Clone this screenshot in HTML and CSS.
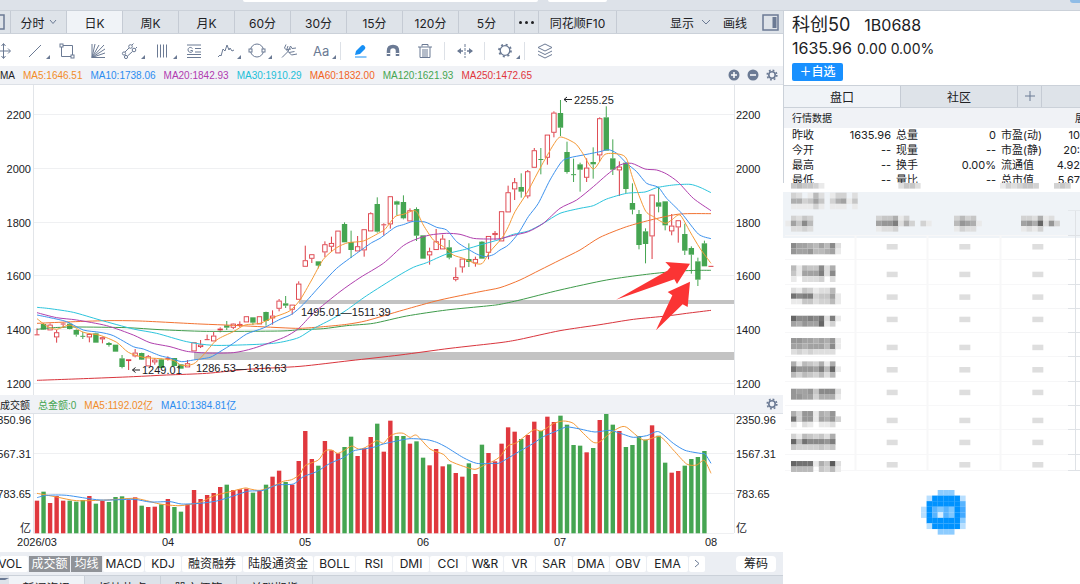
FILE: index.html
```html
<!DOCTYPE html>
<html lang="zh-CN">
<head>
<meta charset="utf-8">
<title>科创50 1B0688</title>
<link rel="stylesheet" href="styles.css">
</head>
<body>
<div class="app">
  <header class="topbar">
    <span class="topbar-tab topbar-tab-wide"></span><span class="topbar-tab"></span>
    <span class="avatar"></span>
  </header>
  <div class="columns">
    <main class="chart-pane">
      <nav class="periods">
        <button class="period edge" aria-label="左侧栏"><svg width="10" height="18" viewBox="0 0 10 18"><path d="M0 2H4V16H0" fill="none" stroke="#6b7a94" stroke-width="1.5"/></svg></button>
        <button class="period">分时 <svg class="chev" width="8" height="6" viewBox="0 0 8 6"><path d="M1 1L4 4.500L7 1"/></svg></button>
        <button class="period active">日K</button>
        <button class="period">周K</button>
        <button class="period">月K</button>
        <button class="period">60分</button>
        <button class="period">30分</button>
        <button class="period">15分</button>
        <button class="period">120分</button>
        <button class="period">5分</button>
        <button class="period more" aria-label="更多"><i></i><i></i><i></i></button>
        <button class="period wide">同花顺F10</button>
        <div class="period-actions">
          <button class="action">显示 <svg class="chev" width="10" height="6" viewBox="0 0 10 6"><path d="M1 1L5 5L9 1"/></svg></button>
          <button class="action">画线</button>
          <button class="action" aria-label="右侧栏"><svg width="17" height="17" viewBox="0 0 17 17"><rect x="1" y="1" width="15" height="15" fill="none" stroke="#6b7a94" stroke-width="1.500"/><rect x="10.500" y="3" width="4" height="11" fill="#6b7a94"/></svg></button>
        </div>
      </nav>

      <div class="tools">
        <button class="tool first" aria-label="移动"><svg width="12" height="18" viewBox="0 0 12 18"><path d="M0 9H10M3.500 2V16M8 6.500L10.500 9L8 11.500M1.500 4L3.500 1.500L5.500 4M1.500 14L3.500 16.500L5.500 14"/></svg></button>
        <div class="draw-tools">
          <button class="tool sub" aria-label="线段"><svg viewBox="0 0 18 18"><path d="M3 15L15 3"/></svg></button>
          <button class="tool" aria-label="矩形"><svg viewBox="0 0 18 18"><path d="M5 3.500H14.500V13M13 14.500H3.500V5"/><rect x="2" y="2" width="3" height="3"/><rect x="13" y="13" width="3" height="3"/></svg></button>
          <button class="tool" aria-label="扇形线"><svg viewBox="0 0 18 18"><path d="M3 2V15.500H16M3 15.500L6 2M3 15.500L10 3M3 15.500L15 3M3 15.500L16 7M3 15.500L16 11"/></svg></button>
          <button class="tool sub" aria-label="通道"><svg viewBox="0 0 18 18"><path d="M4 10L8 6M11 3L12.500 1.500M6.500 14L11.500 9.500M14.500 6.500L16 5"/><circle cx="9.500" cy="4.500" r="1.800"/><circle cx="5" cy="15" r="1.600"/><circle cx="13" cy="8" r="1.800"/><circle cx="3" cy="11.500" r="1.600"/></svg></button>
          <button class="tool sub" aria-label="周期线"><svg viewBox="0 0 18 18"><path d="M4.500 2.500V15.500M7.500 2.500V15.500M10.500 2.500V15.500M13.500 2.500V15.500"/></svg></button>
          <button class="tool" aria-label="黄金分割"><svg viewBox="0 0 18 18"><path d="M2 3H16M10 6.500H16M10 10H16M2 12.500H16M2 15.500H16M7.500 6.500C5.500 4.500 3 5.500 3 8S6.500 11 7.500 9.500V8.500H5.500"/></svg></button>
          <button class="tool sub" aria-label="波浪"><svg viewBox="0 0 18 18"><path d="M1 15L3 13L4 14L6 7L8 9L10 3L12 8L13 6L15 9L17 8"/></svg></button>
          <button class="tool sub" aria-label="圆"><svg viewBox="0 0 18 18"><circle cx="9" cy="8.500" r="6.500"/><rect x="1" y="7" width="3" height="3" fill="#fff"/><rect x="14" y="7" width="3" height="3" fill="#fff"/></svg></button>
          <button class="tool" aria-label="叉线"><svg viewBox="0 0 18 18"><path d="M2 15.500L8 9.500M4.500 6L11.500 13M4.500 6L6 2.500M6.500 8L8 4M9 10.500L14.500 9.500M11.500 13L17 12M8 9.500L10.500 4L12 6.500L16 6M7 7.500L11 7"/></svg></button>
          <button class="tool sub tool-text">Aa</button>
        </div>
        <span class="sep"></span>
        <button class="tool" aria-label="画笔"><svg viewBox="0 0 18 18"><path d="M3 13L4 9L9.500 3.500Q11 2.500 12.500 4T13 7L8 12Z" fill="#168ff5" stroke="none"/><path d="M3 15H14.500" stroke="#168ff5"/></svg></button>
        <button class="tool" aria-label="磁吸"><svg viewBox="0 0 18 18"><path d="M4.500 14V9Q4.500 4.500 9 4.500T13.500 9V14" stroke-width="3.500"/><path d="M2.500 11.500H6.500M11.500 11.500H15.500" stroke="#fff"/></svg></button>
        <button class="tool" aria-label="删除"><svg viewBox="0 0 18 18"><path d="M2 5H16M6 4.500V2.500H12V4.500M4 5V15.500H14V5M7 7V15M9 7V15M11 7V15"/></svg></button>
        <span class="sep"></span>
        <button class="tool" aria-label="拉伸"><svg viewBox="0 0 18 18"><path d="M9 2V16" stroke-dasharray="3 1"/><path d="M2 9H7M11 9H16" stroke-width="1.500"/><path d="M1 9L5 6V12ZM17 9L13 6V12Z" fill="#6b7a94" stroke="none"/></svg></button>
        <span class="sep"></span>
        <button class="tool sub" aria-label="设置"><svg viewBox="0 0 18 18"><circle cx="9" cy="8.500" r="4.800" stroke-width="1.300"/><circle cx="9" cy="8.500" r="6" stroke-width="1.800" stroke-dasharray="2 2.700"/></svg></button>
        <span class="sep"></span>
        <button class="tool" aria-label="图层"><svg viewBox="0 0 18 18"><path d="M9 2L16 5.500L9 9L2 5.500ZM2 9L9 12.500L16 9M2 12.500L9 16L16 12.500"/></svg></button>
      </div>

      <div class="legend">
        <span class="legend-name">MA</span>
        <span class="c-orange">MA5:1646.51</span>
        <span class="c-blue">MA10:1738.06</span>
        <span class="c-purple">MA20:1842.93</span>
        <span class="c-cyan">MA30:1910.29</span>
        <span class="c-deep">MA60:1832.00</span>
        <span class="c-green">MA120:1621.93</span>
        <span class="c-red">MA250:1472.65</span>
        <div class="legend-actions">
          <button aria-label="放大"><svg viewBox="0 0 12 12"><circle cx="6" cy="6" r="5.500" fill="#6b7a94"/><path d="M3 6H9M6 3V9" stroke="#fff" stroke-width="1.500"/></svg></button>
          <button aria-label="缩小"><svg viewBox="0 0 12 12"><circle cx="6" cy="6" r="5.500" fill="#6b7a94"/><path d="M3 6H9" stroke="#fff" stroke-width="1.500"/></svg></button>
          <button aria-label="指标设置"><svg viewBox="0 0 12 12"><circle cx="6" cy="6" r="3.200" fill="none" stroke="#6b7a94" stroke-width="1.600"/><circle cx="6" cy="6" r="4.800" fill="none" stroke="#6b7a94" stroke-width="1.600" stroke-dasharray="1.800 1.970"/></svg></button>
        </div>
      </div>
      <svg class="plot" id="price" viewBox="0 0 783 310" role="img" aria-label="日K线"></svg>

      <div class="legend">
        <span class="legend-name">成交额</span>
        <span class="c-green">总金额:0</span>
        <span class="c-orange">MA5:1192.02亿</span>
        <span class="c-blue">MA10:1384.81亿</span>
        <div class="legend-actions">
          <button aria-label="成交额设置"><svg viewBox="0 0 12 12"><circle cx="6" cy="6" r="3.200" fill="none" stroke="#6b7a94" stroke-width="1.600"/><circle cx="6" cy="6" r="4.800" fill="none" stroke="#6b7a94" stroke-width="1.600" stroke-dasharray="1.800 1.970"/></svg></button>
        </div>
      </div>
      <svg class="plot" id="volume" viewBox="0 0 783 138" role="img" aria-label="成交额"></svg>

      <nav class="indicators">
        <button class="w28 vol">VOL</button><button class="w42 on">成交额</button><button class="w32 on">均线</button>
        <button class="w42">MACD</button><button class="w36">KDJ</button><button class="w60">融资融券</button><button class="w70">陆股通资金</button>
        <button class="w42">BOLL</button><button class="w36">RSI</button><button class="w36">DMI</button><button class="w36">CCI</button><button class="w36">W&amp;R</button>
        <button class="w32">VR</button><button class="w36">SAR</button><button class="w36">DMA</button><button class="w36">OBV</button><button class="w42">EMA</button>
        <button class="w16" aria-label="更多指标"><svg class="chev" width="6" height="9" viewBox="0 0 6 9"><path d="M1 1L5 4.500L1 8"/></svg></button>
        <button class="w40 chips">筹码</button>
      </nav>
      <nav class="bottom-tabs">
        <button class="dock" aria-label="展开"></button>
        <button class="active">新闻资讯</button><button>板块热点</button><button>股市便签</button><button>关联期指</button>
      </nav>
    </main>

    <aside class="quote">
      <section class="quote-head">
        <h1><span class="name">科创50</span><span class="code">1B0688</span></h1>
        <p class="price"><span class="last">1635.96</span> 0.00 0.00%</p>
        <button class="add">＋自选</button>
      </section>
      <nav class="quote-tabs">
        <button class="active">盘口</button><button>社区</button><button class="plus" aria-label="添加"><svg width="10" height="10" viewBox="0 0 10 10"><path d="M0 5H10M5 0V10" stroke="#6b7a94"/></svg></button><span></span>
      </nav>
      <div class="quote-sub"><span>行情数据</span><span class="expand">展开</span></div>
      <div class="quote-data">
        <table>
          <tr><th>昨收</th><td>1635.96</td><th>总量</th><td>0</td><th>市盈(动)</th><td>10</td></tr>
          <tr><th>今开</th><td>--</td><th>现量</th><td>--</td><th>市盈(静)</th><td>20:</td></tr>
          <tr><th>最高</th><td>--</td><th>换手</th><td>0.00%</td><th>流通值</th><td>4.92</td></tr>
          <tr><th>最低</th><td>--</td><th>量比</th><td>--</td><th>总市值</th><td>5.67</td></tr>
        </table>
      </div>
      <svg class="mosaic" id="mosaic" viewBox="0 0 297 293" aria-hidden="true"></svg>
      <div class="quote-foot">
        <button class="assist" aria-label="助手"><svg id="assist" width="46" height="46" viewBox="0 0 138 138"></svg></button>
      </div>
    </aside>
  </div>
</div>
<script src="chart.js"></script>
</body>
</html>
```
FILE: styles.css
```css
* { box-sizing: border-box; }
body {
  margin: 0;
  background: #fff;
  color: #202124;
  font-family: Inter, "Noto Sans CJK SC", sans-serif;
  font-size: 12px;
}
button {
  margin: 0;
  padding: 0;
  border: 0;
  background: none;
  color: inherit;
  font: inherit;
  white-space: nowrap;
}
h1, p { margin: 0; font-weight: 400; }

.app { height: 100vh; overflow: hidden; display: flex; flex-direction: column; }
.topbar {
  flex: 0 0 10px;
  display: flex;
  align-items: flex-start;
  gap: 10px;
  padding-left: 243px;
  background: #dde2e9;
  overflow: hidden;
}
.topbar-tab { width: 59px; height: 2px; background: #fff; border-radius: 0 0 3px 3px; }
.topbar-tab-wide { width: 295px; }
.avatar { width: 16px; height: 3px; margin-left: auto; margin-right: -6px; border-radius: 0 0 8px 8px; background: #8fbce6; }
.columns { flex: 1; display: flex; min-height: 0; }
.chart-pane { flex: 783 1 0; min-width: 0; }
.quote { flex: 297 1 0; min-width: 0; overflow: hidden; }

.periods {
  display: flex;
  height: 24px;
  background: #dee3e9;
  border-top: 1px solid #cbd1d9;
  border-bottom: 1px solid #cbd1d9;
}
.period {
  flex: 0 0 56px;
  display: flex;
  align-items: center;
  justify-content: center;
  gap: 4px;
  border-right: 1px solid #c5cbd4;
}
.period.edge { flex-basis: 9px; justify-content: flex-start; }
.period.active { background: #f0f3f7; }
.period.more { flex-basis: 24px; gap: 3px; }
.period.more i { width: 3px; height: 3px; border-radius: 50%; background: #202124; }
.period.wide { flex-basis: 78px; }
.period-actions { margin-left: auto; display: flex; align-items: center; gap: 12px; padding-right: 4px; }
.action { display: flex; align-items: center; gap: 7px; }
.action:last-child { margin-left: 3px; }
.chev { fill: none; stroke: #6b7a94; }

.tools { display: flex; align-items: center; height: 32px; padding-top: 2px; background: #fff; }
.tool { position: relative; flex: 0 0 32px; height: 26px; display: flex; align-items: center; justify-content: center; }
.tool.first { flex-basis: 19px; justify-content: flex-start; }
.tool svg { height: 18px; fill: none; stroke: #6b7a94; stroke-width: 1; }
.draw-tools { flex: 0 0 318px; display: grid; grid-template-columns: repeat(10, 1fr); }
.tool-text { color: #6b7a94; font-size: 13px; }
.tool.sub::after {
  content: "";
  position: absolute;
  right: 1px;
  bottom: 5px;
  border-left: 4px solid transparent;
  border-bottom: 4px solid #6b7a94;
}
.sep { flex: 0 0 1px; height: 18px; margin: 0 4px 0 3px; background: #dde1e7; }

.legend {
  display: flex;
  align-items: center;
  gap: 8px;
  height: 19px;
  background: #f0f2f6;
  border-bottom: 1px solid #dde1e7;
  font-family: "Liberation Sans", "Noto Sans CJK SC", sans-serif;
  font-size: 10px;
  white-space: nowrap;
}
.legend-actions { margin-left: auto; display: flex; gap: 7px; padding-right: 5px; }
.legend-actions button { width: 12px; height: 12px; }
.legend-actions svg { display: block; width: 12px; height: 12px; }
.c-orange { color: #f28c28; }
.c-blue { color: #2b8cf0; }
.c-purple { color: #b03ab0; }
.c-cyan { color: #1cc0d8; }
.c-deep { color: #f2641e; }
.c-green { color: #45a551; }
.c-red { color: #e0353c; }

.plot { display: block; width: 100%; height: auto; font-family: "Liberation Sans", "Noto Sans CJK SC", sans-serif; font-size: 11px; }
.plot text { fill: #202124; }
.grid { stroke: #eff0f2; }
.axis { stroke: #e2e5e9; }
.line { fill: none; stroke-width: 1; }
.band { fill: #c3c3c3; }
.mark { fill: #fb3434; }
.arrow { fill: none; stroke: #202124; }

.indicators { display: flex; align-items: center; gap: 1px; height: 24px; padding-top: 1px; background: #ebeef3; border-bottom: 1px solid #cbd1d9; }
.indicators button { height: 16px; line-height: 16px; background: #fff; border-radius: 2px; overflow: hidden; }
.indicators .on { background: #909398; color: #fff; border-radius: 0; }
.indicators .vol { display: flex; justify-content: flex-end; padding-right: 6px; }
.w16 { flex: 0 0 16px; }
.w28 { flex: 0 0 28px; }
.w32 { flex: 0 0 31px; }
.w36 { flex: 0 0 36px; }
.w40 { flex: 0 0 40px; }
.w42 { flex: 0 0 41px; }
.w60 { flex: 0 0 60px; }
.w70 { flex: 0 0 70px; }
.indicators .chips { margin-left: auto; margin-right: 7px; border-radius: 4px; }

.bottom-tabs { display: flex; height: 20px; background: #dde2e9; }
.bottom-tabs button { flex: 0 0 76px; padding-top: 2px; border-right: 1px solid #cbd1d9; }
.bottom-tabs .dock { flex-basis: 9px; height: 16px; border-top: 2px solid #6b7a94; border-right: 4px solid #dde2e9; margin-top: 2px; }
.bottom-tabs .active { background: #f0f3f7; }

.quote-head { padding: 2px 8px 0; height: 75px; border-left: 1px solid #cbd1d9; border-top: 1px solid #cbd1d9; }
.quote-head h1 { display: flex; align-items: baseline; gap: 14px; line-height: 24px; }
.name { font-size: 18px; }
.code { font-size: 16px; }
.price { font-size: 14px; line-height: 22px; }
.last { font-size: 16px; margin-right: 1px; }
.add { display: block; width: 51px; height: 18px; margin-top: 3px; border-radius: 2px; background: #1890ff; color: #fff; line-height: 18px; font-weight: 500; }
.quote-tabs { display: flex; height: 23px; background: #dee3e9; border: 1px solid #cbd1d9; border-right: 0; }
.quote-tabs button { flex: 0 0 117px; border-right: 1px solid #c5cbd4; }
.quote-tabs .plus { flex-basis: 24px; }
.quote-tabs .active { background: #f0f3f7; }
.quote-sub {
  display: flex;
  justify-content: space-between;
  height: 20px;
  padding-left: 8px;
  line-height: 20px;
  background: #f0f2f6;
  border-left: 1px solid #cbd1d9;
  font-size: 10px;
  white-space: nowrap;
}
.expand { margin-right: -15px; }
.quote-data { height: 55px; overflow: hidden; border-left: 1px solid #cbd1d9; }
.quote-data table { width: 100%; table-layout: fixed; border-collapse: collapse; font-size: 11px; }
.quote-data tr { height: 15px; }
.quote-data th, .quote-data td { padding: 0; line-height: 15px; font-weight: 400; white-space: nowrap; }
.quote-data th { width: 50px; padding-left: 5px; text-align: left; }
.quote-data th:first-child { width: 53px; padding-left: 8px; }
.quote-data td { text-align: right; }
.quote-data td:nth-child(2) { width: 54px; }
.quote-data td:nth-child(4) { width: 55px; }
.mosaic { display: block; width: 100%; height: auto; }
.quote-foot { padding: 14px 0 0 138px; height: 107px; }
.assist { display: block; width: 46px; height: 46px; }
.assist svg { display: block; }
```
FILE: chart.js
```js
// Chart geometry uses thirds of a unit, so every value is a whole number.
const T = 3, X0 = 111, STEP = 19.63;
const RED = '#dc3b44', GREEN = '#45a551', BAR_RED = '#e0383e';
const cx = i => X0 + i * STEP;
const el = (tag, attrs, text) => {
  const a = Object.entries(attrs).map(([k, v]) => `${k}="${v}"`).join(' ');
  return `<${tag} ${a}>${text || ''}</${tag}>`;
};
const n = v => Math.round(v * 100) / 100;

// Candle groups: vertical base, then colour, high, body top, body bottom, low.
const candles = [
  [840, `r145,163,166,166 g129,132,149,150 r130,134,151,151 r150,157,172,188 r128,130,134,144 g128,131,147,148
  g148,150,164,170 g155,168,170,177 r160,162,172,187 g158,160,188,188 r170,172,178,190 g186,189,195,200 g194,194,215,215
  g225,235,261,265 r238,238,243,270 r207,218,229,232 g218,219,239,240 r225,229,259,259 r234,239,247,254 g236,238,264,264
  r229,234,238,242 g234,234,258,259 g252,253,266,266 r240,250,262,262 r187,187,214,214 r180,194,201,204 r164,178,180,180
  r155,167,184,184 r142,146,151,157 g123,136,143,150 r130,131,143,147 r124,132,138,142 r109,109,127,127 g112,112,128,135
  r109,109,133,133 g95,96,123,137 r91,107,115,134 r57,62,86,94 g48,70,77,84 r74,74,89,104 r4,11,59,59`],
  [540, `r197,241,260,260 r223,223,236,249 g244,244,257,265 r184,193,217,231 r170,189,200,216 r152,152,220,220 g127,132,187,187
  g152,186,210,234 r168,199,214,214 r148,148,211,230 r97,100,154,154 g52,72,155,158 r130,133,136,167 r49,49,133,146
  g62,64,74,106 g46,66,115,118 r85,91,124,124 g82,87,167,183 g166,166,236,236 r203,214,226,254 r147,184,210,210
  r164,176,208,208 g180,202,233,238 r262,291,299,304 r236,236,262,278 g190,237,246,261 r230,237,250,260 g183,185,236,236
  r168,168,218,238 r153,159,165,180`],
  [270, `r364,364,454,454 r287,307,367,367 r264,277,298,330 g250,291,305,323 r240,244,319,325 r174,181,233,233 g174,207,210,253
  r134,134,203,224 r64,68,128,142 g30,69,113,138 g155,186,246,251 g206,253,255,276 g218,223,239,305 r205,233,263,276
  g172,216,223,266 r82,85,196,214 g49,82,182,182 g148,205,239,255 r214,230,241,318 g216,218,297,310 g280,339,359,373
  g360,372,465,478 g415,424,462,520 r314,314,439,507 g290,337,350,367 g334,334,406,421 r372,407,424,436 r391,391,412,458
  g401,432,482,495 g469,474,494,551 g503,514,569,588 g452,460,529,529 r528,528,530,530`]
];

// Line groups: [x base, y base, points].
const A = 840, B = 540, C = 270;
const lines = {
  '#d9353d': [[0, A, '111,301 250,296 400,290 500,285 620,280 740,268 900,259 1050,242 1200,225 1350,205'], [1500, C, '0,758 60,748 180,722 300,704 400,688 500,678 560,670 633,661']],
  '#3f9b4b': [[0, A, '111,148 160,143 230,141 380,143 480,149 620,154 840,153'], [A, B, '60,449 130,446 200,437 280,430 380,408 500,390 620,378'], [1500, C, '0,643 60,630 180,600 320,570 440,553 540,543 600,541 633,541']],
  '#f27332': [[0, A, '111,130 200,126 320,122 420,123 600,132 700,136'], [A, B, '0,443 60,445 130,440 200,433 260,422 370,390 480,360 600,335'], [1500, C, '0,593 60,570 120,540 180,510 240,480 300,442 380,410 460,388 540,372 633,371']],
  '#2cc4dc': [[0, A, '111,82 150,86 220,97 300,120 400,147 470,160 560,185 640,196 750,194 820,190 860,183 898,172'], [A, B, '100,446 160,415 200,390 260,347 350,290 400,262 440,248 500,222 560,207 600,195'], [1500, C, '0,448 40,433 85,423 130,400 180,370 240,355 280,347 320,327 380,310 435,306 470,293 520,285 570,283 600,292 633,308']],
  '#b040ae': [[0, A, '111,98 170,113 230,120 320,137 400,165 450,188 510,200 560,214 620,219 700,218 760,205 850,173'], [A, B, '55,446 100,400 180,335 240,293 310,250 370,197 410,177 450,165 500,160 540,163 580,175 620,177'], [1500, C, '0,446 40,436 85,425 130,400 180,355 230,330 280,290 320,255 360,225 395,220 435,237 470,240 500,252 535,277 580,325 633,362']],
  '#3d92ee': [[0, A, '111,105 150,113 200,125 250,150 300,157 340,167 400,200 430,207 480,227 510,234 545,245 580,240 630,232 660,215 700,190 740,162 790,144'], [A, B, '0,418 35,403 70,373 120,318 170,265 230,220 275,188 300,175 345,142 370,134 400,124 435,126 470,142 500,150 530,185 560,205 590,222 615,230 640,224'], [1500, C, '0,480 25,465 55,430 85,380 115,340 150,270 185,215 210,203 250,195 300,185 325,179 350,190 380,220 410,245 440,280 475,292 500,325 545,370 595,432 633,446']],
  '#f59a37': [[0, A, '111,116 140,138 170,148 210,135 250,157 300,166 350,187 385,217 430,232 480,236 520,241 545,256 580,252 610,225 650,180 700,155 735,135 780,130 820,112'], [A, B, '0,405 30,392 60,360 95,300 130,238 170,203 205,188 250,183 295,160 315,148 345,110 370,103 400,92 412,98 430,135 460,180 490,200 520,225 550,235 585,250 607,250 630,215'], [1500, C, '5,445 25,410 45,365 80,310 120,235 160,165 182,141 225,160 245,185 280,237 315,193 360,193 380,207 400,270 435,360 460,380 495,400 515,390 540,375 570,425 600,475 633,520']]
};

const points = groups => groups.flatMap(([bx, by, s]) => s.trim().split(/\s+/).map(p => {
  const [x, y] = p.split(',').map(Number);
  return [bx + x, by + y];
}));

function smooth(pts, oy) {
  const p = pts.map(([x, y]) => [x / T, y / T - oy]);
  let d = `M${n(p[0][0])} ${n(p[0][1])}`;
  for (let i = 0; i < p.length - 1; i++) {
    const a = p[i - 1] || p[i], b = p[i], c = p[i + 1], e = p[i + 2] || c;
    d += `C${n(b[0] + (c[0] - a[0]) / 8)} ${n(b[1] + (c[1] - a[1]) / 8)} ${n(c[0] - (e[0] - b[0]) / 8)} ${n(c[1] - (e[1] - b[1]) / 8)} ${n(c[0])} ${n(c[1])}`;
  }
  return d;
}

function drawPrice() {
  const top = 85;
  const y = v => n(v / T - top);
  let out = '';
  ['2200', '2000', '1800', '1600', '1400', '1200'].forEach((label, k) => {
    const gy = Math.floor(y(344 + k * 161)) + 0.5;
    out += el('path', { class: 'grid', d: `M33 ${gy}H734` });
    out += el('text', { x: 31, y: gy + 4, 'text-anchor': 'end' }, label);
    out += el('text', { x: 736, y: gy + 4 }, label);
  });
  out += el('path', { class: 'axis', d: 'M33.5 0V310M734.5 0V310' });
  out += el('rect', { class: 'band', x: 194, y: y(1056), width: 540, height: 8 });
  out += el('rect', { class: 'band', x: 299, y: y(900), width: 435, height: 4 });
  let i = 0;
  candles.forEach(([base, text]) => text.trim().split(/\s+/).forEach(item => {
    const red = item[0] === 'r';
    const [hi, a, b, lo] = item.slice(1).split(',').map(v => y(base + +v));
    const x = n(cx(i++) / T);
    const color = red ? RED : GREEN;
    out += el('path', { d: `M${x} ${hi}V${a}M${x} ${b}V${lo}`, stroke: color });
    if (b - a < 1.5) out += el('path', { d: `M${x - 2.5} ${(a + b) / 2}h5`, stroke: color });
    else if (red) out += el('rect', { x: n(x - 2.2), y: a + 0.4, width: 4.4, height: n(b - a - 0.8), fill: '#fff', stroke: color, 'stroke-width': 0.9 });
    else out += el('rect', { x: n(x - 2.7), y: a, width: 5.4, height: n(b - a), fill: color });
  }));
  for (const [color, groups] of Object.entries(lines)) out += el('path', { class: 'line', stroke: color, d: smooth(points(groups), top) });
  out += el('path', { class: 'arrow', d: 'M572 14.500H564M567 12L564 14.500L567 17M140 285H132.500M135.500 282.500L132.500 285L135.500 287.500' });
  out += el('text', { x: 574, y: 19 }, '2255.25');
  out += el('text', { x: 142, y: 289 }, '1249.01');
  out += el('text', { x: 196, y: 287 }, '1286.53—1316.63');
  out += el('text', { x: 301, y: 231 }, '1495.01—1511.39');
  const poly = s => s.split(' ').map(p => { const [a, b] = p.split(','); return n(500 + a / T) + ',' + n(90 - top + b / T); }).join(' ');
  out += el('polygon', { class: 'mark', points: poly('348,629 502,542 511,532 496,516 570,521 531,582 523,568') });
  out += el('polygon', { class: 'mark', points: poly('468,721 517,616 503,606 570,575 563,651 548,643') });
  document.getElementById('price').innerHTML = out;
}

const volumes = `r317 g290 r324 r303 r317 g317 g320 g315 r303 g326 r318 g321 g306 g304 r314 r307 g332 r336 r335 g328 r312 g336 g350
r328 r285 r312 r300 r294 r276 g269 r285 r283 r281 g293 r288 g269 r245 r227 g261 r269 r198 r108 r192 g212 r138 r166 r175 g156 g125 r183
r160 r126 g86 r170 r77 g123 g123 r146 g139 g188 r211 r162 r214 g208 r234 r245 g205 r237 g149 r174 r199 r146 r97 r110 g132 r120 r80 g108
r65 r81 g62 g89 g150 g152 r172 g159 r75 g57 g89 r108 g156 g150 g123 g134 r91 g122 g203 r233 r228 g212 g192 g186 g168`;
const volumeLines = {
  '#f59a37': [[0, 0, '111,295 170,306 230,317 320,315 400,310 440,317 480,327 540,332 600,322 640,303 690,290 735,279'], [750, 0, '0,282 30,286 70,273 100,259 125,254 150,238 165,212 205,195 225,168 245,165 262,175 280,168 305,153 325,162 345,158 380,137 400,145 420,123 440,115 460,115 480,127 500,121 540,162 580,178 600,198 640,214 675,223 700,212 730,198'], [1500, 0, '0,185 25,152 50,143 100,105 125,108 160,86 190,78 220,85 250,115 280,142 300,140 330,115 360,97 380,97 430,135 480,125 520,165 560,207 590,210 613,196 633,235']],
  '#3d92ee': [[0, 0, '111,308 140,301 200,301 300,315 400,313 450,321 510,320 545,327 600,325 650,318 700,303 735,291'], [750, 0, '0,288 40,286 80,270 130,267 160,245 200,230 240,205 280,188 310,168 340,162 370,157 400,147 440,138 480,131 530,134 560,142 590,157 640,188 680,205 730,205'], [1500, 0, '0,203 60,168 100,145 130,125 170,108 200,96 240,102 285,111 330,106 370,118 400,127 440,122 476,110 520,145 555,166 600,175 615,177 633,205']]
};

function drawVolume() {
  const top = 19;
  let out = el('path', { class: 'grid', d: 'M33 39.500H734M33 79.500H734M33 119.500H734' });
  out += el('path', { class: 'axis', d: 'M33.500 0V119M734.500 0V119' });
  volumes.trim().split(/\s+/).forEach((v, i) => {
    const y = +v.slice(1) / T - top;
    out += el('rect', { x: n(cx(i) / T - 2.2), y: n(y), width: 4.4, height: n(119.3 - y), fill: v[0] === 'r' ? BAR_RED : GREEN });
  });
  for (const [color, groups] of Object.entries(volumeLines)) out += el('path', { class: 'line', stroke: color, d: smooth(points(groups), top) });
  [['2350.96', 10], ['1567.31', 44], ['783.65', 84], ['亿', 118]].forEach(([t, y]) => {
    out += el('text', { x: 31, y, 'text-anchor': 'end' }, t) + el('text', { x: 736, y }, t);
  });
  [['2026/03', 37], ['04', 168], ['05', 305], ['06', 423], ['07', 560], ['08', 711]].forEach(([t, x]) => {
    out += el('text', { x, y: 132, 'text-anchor': 'middle' }, t);
  });
  document.getElementById('volume').innerHTML = out;
}

// Pixelated rows: x, y, then one darkness digit per block.
const blocks = `33,10,454431 355,10,2442 660,10,1323443 822,10,343
33,39,320152013302 33,56,663474036714 33,72,111131011101
33,108,3243 16,123,17495 33,139,2232
288,108,3446130 288,123,788a263031 288,139,1223
522,108,3534 522,123,58761 522,139,1322
723,108,332612 723,123,786c283 723,139,1213
33,190,977657592 33,207,877855671
33,257,51544926 33,273,41777a29 33,290,10222302
33,324,21431225 33,341,b9aa34471 33,357,114423351
33,408,c99a9b2a1 33,424,76877c13
33,475,887767681 33,492,776777591 33,508,23232222
33,545,61543616 33,560,b8887a5c1 33,577,53543525
33,627,877849992 33,643,887736661
33,694,63881658 33,710,b38817683 33,726,10210112
33,762,31543426 33,778,c5b9998a 33,794,43333434
33,844,cbbb164d2 33,860,555504351`;

function drawMosaic() {
  const ox = 3, oy = 3.3, S = 50 / 9;
  const X = v => n(v / T - ox), Y = v => n(v / T - oy);
  let out = el('rect', { x: 0, y: 9, width: 297, height: 46, fill: '#eff3f7' });
  const rowLines = [235, 259, 284, 308, 332, 356, 381, 405, 429, 454, 470];
  rowLines.forEach(v => {
    out += el('path', { d: `M2 ${v - 182.5}H285`, stroke: '#f7f7f8' });
    out += el('path', { d: `M285 ${v - 182.5}H297`, stroke: '#dfe2e6' });
  });
  out += el('path', { d: 'M72.500 52V287M144.500 52V287M217.500 52V287', stroke: '#f7f7f8', 'stroke-width': 2 });
  out += el('path', { d: 'M292.500 28V287', stroke: '#dfe2e6' });
  out += el('path', { d: 'M285 27.500H297', stroke: '#e4e8ec' });
  [193, 276, 344, 411, 495, 562, 630, 714, 780, 847].forEach(v => [320, 538, 757].forEach(u => {
    out += el('rect', { x: X(u), y: Y(v), width: 11, height: 5.5, fill: '#dedede' });
  }));
  blocks.trim().split(/\s+/).forEach(item => {
    const [x, y, row] = item.split(',');
    [...row].forEach((c, k) => {
      const level = parseInt(c, 16);
      if (!level) return;
      const g = 246 - level * 12;
      out += el('rect', { x: n(X(+x) + k * S), y: Y(+y), width: 5.6, height: 5.6, fill: `rgb(${g},${g},${g})` });
    });
  });
  document.getElementById('mosaic').innerHTML = out;
}

function drawAssist() {
  const colors = { f: '#0092ff', a: '#8dccff', b: '#b8dfff', c: '#57b4ff', d: '#7ec7ff', e: '#d5edff', g: '#42a9ff' };
  const rows = ['...aaa..', '.bfffffb', '.ffffffc', 'bfcdcdfg', 'bfcecdfg', '.ffffffa', '.bfffffb', '...aaa..'];
  let out = '';
  rows.forEach((row, r) => [...row].forEach((c, k) => {
    if (c !== '.') out += el('rect', { x: n(k * 16.7), y: n(r * 16.7), width: 17, height: 17, fill: colors[c] });
  }));
  document.getElementById('assist').innerHTML = out;
}

drawPrice();
drawVolume();
drawMosaic();
drawAssist();
```
